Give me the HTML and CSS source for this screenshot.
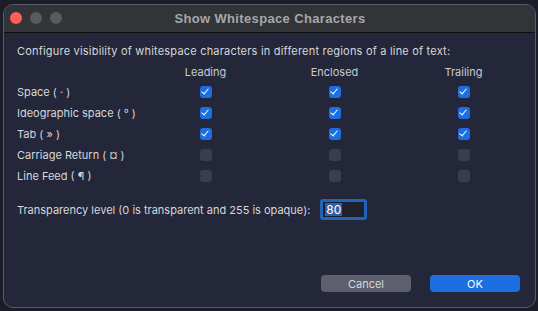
FILE: index.html
```html
<!DOCTYPE html>
<html>
<head>
<meta charset="utf-8">
<link rel="stylesheet" href="styles.css">
</head>
<body>
<div class="window">
  <div class="titlebar">
    <div class="lights">
      <span class="light red"></span>
      <span class="light gray"></span>
      <span class="light gray"></span>
    </div>
    <div class="title">Show Whitespace Characters</div>
  </div>
  <div class="content">
    <p class="intro">Configure visibility of whitespace characters in different regions of a line of text:</p>
    <div class="grid">
      <span></span>
      <span class="head">Leading</span>
      <span class="head">Enclosed</span>
      <span class="head">Trailing</span>

      <span class="label">Space ( · )</span>
      <span class="cell"><span class="cb on"></span></span>
      <span class="cell"><span class="cb on"></span></span>
      <span class="cell"><span class="cb on"></span></span>

      <span class="label">Ideographic space ( ° )</span>
      <span class="cell"><span class="cb on"></span></span>
      <span class="cell"><span class="cb on"></span></span>
      <span class="cell"><span class="cb on"></span></span>

      <span class="label">Tab ( » )</span>
      <span class="cell"><span class="cb on"></span></span>
      <span class="cell"><span class="cb on"></span></span>
      <span class="cell"><span class="cb on"></span></span>

      <span class="label">Carriage Return ( ¤ )</span>
      <span class="cell"><span class="cb"></span></span>
      <span class="cell"><span class="cb"></span></span>
      <span class="cell"><span class="cb"></span></span>

      <span class="label">Line Feed ( ¶ )</span>
      <span class="cell"><span class="cb"></span></span>
      <span class="cell"><span class="cb"></span></span>
      <span class="cell"><span class="cb"></span></span>
    </div>
    <div class="transp">
      <span class="label">Transparency level (0 is transparent and 255 is opaque):</span>
      <span class="input"><span class="sel">80</span></span>
    </div>
    <div class="buttons">
      <span class="btn cancel">Cancel</span>
      <span class="btn ok">OK</span>
    </div>
  </div>
</div>
</body>
</html>
```
FILE: styles.css
```css
html, body {
  margin: 0;
  padding: 0;
}
body {
  background: #1b1d29;
  width: 538px;
  height: 311px;
  overflow: hidden;
  font-family: Inter, "Liberation Sans", Arial, sans-serif;
  font-size: 11px;
  color: #d6d7dc;
}
.window {
  box-sizing: border-box;
  margin: 4px 0 0 3px;
  width: 533px;
  height: 304px;
  border: 1px solid #5a5c63;
  border-radius: 10px;
  background: #232739;
  overflow: hidden;
  display: flex;
  flex-direction: column;
}
.titlebar {
  height: 27px;
  flex: none;
  background: #333438;
  border-bottom: 1px solid #0d0d10;
  position: relative;
  display: flex;
  align-items: center;
  justify-content: center;
}
.lights {
  position: absolute;
  left: 6px;
  top: 7px;
  display: flex;
  gap: 8px;
}
.light {
  width: 12px;
  height: 12px;
  border-radius: 50%;
  display: block;
}
.light.red { background: #fe5f57; }
.light.gray { background: #5a5b5f; }
.title {
  font-family: "Liberation Sans", Arial, sans-serif;
  font-weight: bold;
  font-size: 13px;
  letter-spacing: 0.35px;
  color: #a6a7ab;
  margin-left: 1px;
}
.content {
  flex: 1;
  display: flex;
  flex-direction: column;
  padding: 11px 0 0 13px;
}
.intro {
  margin: 0;
  line-height: 14px;
  letter-spacing: 0.2px;
}
.grid {
  margin-top: 5px;
  display: grid;
  grid-template-columns: 124px 129px 129px 129px;
  grid-template-rows: 18px repeat(5, 21px);
  align-items: center;
}
.grid > span { display: flex; align-items: center; }
.head { justify-content: center; color: #c9cad0; }
.label { white-space: nowrap; }
.cell { justify-content: center; }
.cb {
  width: 12px;
  height: 12px;
  border-radius: 3px;
  background: #3a3d4b;
  display: block;
  position: relative;
}
.cb.on {
  background: #1d6ee0;
}
.cb.on::after {
  content: "";
  position: absolute;
  left: 3.5px;
  top: 1.5px;
  width: 3px;
  height: 6px;
  border-right: 1.8px solid #fff;
  border-bottom: 1.8px solid #fff;
  transform: rotate(40deg);
}
.transp {
  margin-top: 13px;
  display: flex;
  align-items: center;
  gap: 10px;
}
.input {
  box-sizing: border-box;
  width: 47px;
  height: 21px;
  border: 3px solid #2265b8;
  border-radius: 3px;
  background: #1e202b;
  display: flex;
  align-items: center;
  padding-left: 2px;
}
.sel {
  background: #2f5fa8;
  color: #fff;
  line-height: 13px;
  font-size: 12px;
  padding: 0 1px;
}
.buttons {
  margin-top: auto;
  margin-bottom: 15px;
  display: flex;
  justify-content: flex-end;
  gap: 19px;
  padding-right: 15px;
}
.btn {
  width: 90px;
  height: 17px;
  border-radius: 4px;
  display: flex;
  align-items: center;
  justify-content: center;
  font-size: 11px;
}
.cancel { background: #5d606c; color: #d6d7dc; }
.ok { background: #1d6ee0; color: #fff; }
```
